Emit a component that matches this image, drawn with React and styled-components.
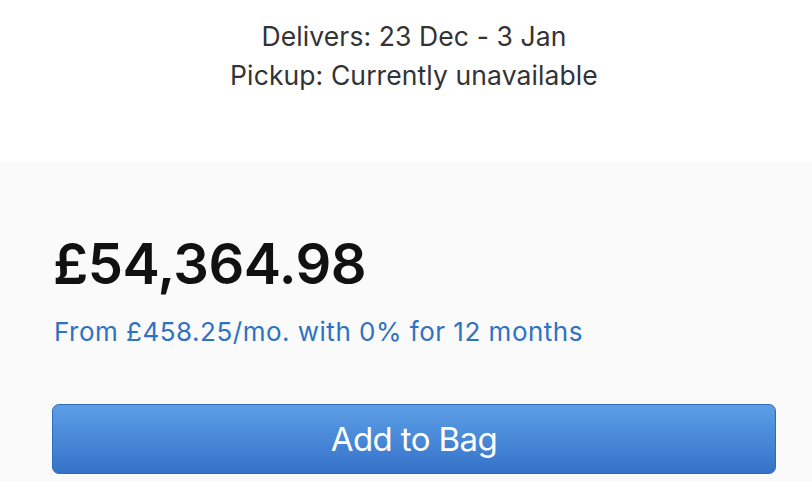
import React from "react";
import styled, { createGlobalStyle } from "styled-components";

const GlobalStyle = createGlobalStyle`
  html, body {
    margin: 0;
    padding: 0;
    background: #fafafa;
  }
  body {
    font-family: "Inter", "Liberation Sans", sans-serif;
    -webkit-font-smoothing: antialiased;
  }
`;

const Page = styled.div`
  width: 812px;
  height: 481px;
  overflow: hidden;
  background: #fafafa;
`;

const Delivery = styled.section`
  background: #ffffff;
  height: 162px;
  box-sizing: border-box;
  padding: 17px 0 0 16px;
  text-align: center;
  color: #333336;
  font-size: 26.5px;
  line-height: 39px;
  letter-spacing: 0.1px;
`;

const Line = styled.div``;

const Purchase = styled.section`
  padding: 68px 36px 0 52px;
`;

const Price = styled.div`
  font-size: 56px;
  font-weight: 600;
  color: #111111;
  line-height: 68px;
  letter-spacing: -0.5px;
  margin-left: 1px;
`;

const Finance = styled.a`
  display: block;
  margin-top: 18px;
  font-size: 26px;
  line-height: 32px;
  letter-spacing: 0.5px;
  color: #2f72c2;
  text-decoration: none;
  margin-left: 2px;
`;

const BagButton = styled.button`
  display: block;
  width: 100%;
  height: 70px;
  margin-top: 56px;
  border: 1px solid #2f6bbd;
  border-radius: 7px;
  background: linear-gradient(#5c9fe6, #3572c8);
  color: #ffffff;
  font-family: "Inter", "Liberation Sans", sans-serif;
  font-size: 33px;
  font-weight: 400;
  letter-spacing: -0.6px;
  cursor: pointer;
`;

export default function App() {
  return (
    <Page>
      <GlobalStyle />
      <Delivery>
        <Line>Delivers: 23 Dec - 3 Jan</Line>
        <Line>Pickup: Currently unavailable</Line>
      </Delivery>
      <Purchase>
        <Price>£54,364.98</Price>
        <Finance href="#">From £458.25/mo. with 0% for 12 months</Finance>
        <BagButton>Add to Bag</BagButton>
      </Purchase>
    </Page>
  );
}
